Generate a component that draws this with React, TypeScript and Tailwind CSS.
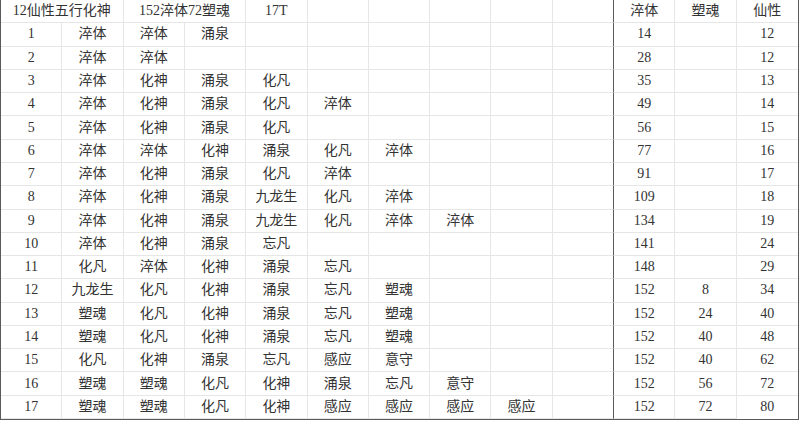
import React from "react";

const rows: string[][] = [
  ["淬体", "淬体", "涌泉"],
  ["淬体", "淬体"],
  ["淬体", "化神", "涌泉", "化凡"],
  ["淬体", "化神", "涌泉", "化凡", "淬体"],
  ["淬体", "化神", "涌泉", "化凡"],
  ["淬体", "淬体", "化神", "涌泉", "化凡", "淬体"],
  ["淬体", "化神", "涌泉", "化凡", "淬体"],
  ["淬体", "化神", "涌泉", "九龙生", "化凡", "淬体"],
  ["淬体", "化神", "涌泉", "九龙生", "化凡", "淬体", "淬体"],
  ["淬体", "化神", "涌泉", "忘凡"],
  ["化凡", "淬体", "化神", "涌泉", "忘凡"],
  ["九龙生", "化凡", "化神", "涌泉", "忘凡", "塑魂"],
  ["塑魂", "化凡", "化神", "涌泉", "忘凡", "塑魂"],
  ["塑魂", "化凡", "化神", "涌泉", "忘凡", "塑魂"],
  ["化凡", "化神", "涌泉", "忘凡", "感应", "意守"],
  ["塑魂", "塑魂", "化凡", "化神", "涌泉", "忘凡", "意守"],
  ["塑魂", "塑魂", "化凡", "化神", "感应", "感应", "感应", "感应"],
];

const stats: [string, string, string][] = [
  ["14", "", "12"],
  ["28", "", "12"],
  ["35", "", "13"],
  ["49", "", "14"],
  ["56", "", "15"],
  ["77", "", "16"],
  ["91", "", "17"],
  ["109", "", "18"],
  ["134", "", "19"],
  ["141", "", "24"],
  ["148", "", "29"],
  ["152", "8", "34"],
  ["152", "24", "40"],
  ["152", "40", "48"],
  ["152", "40", "62"],
  ["152", "56", "72"],
  ["152", "72", "80"],
];

function Cell({ children, span, sep }: { children?: React.ReactNode; span?: boolean; sep?: boolean }) {
  return (
    <div
      className={
        "flex items-center justify-center border-b border-[#e6e6e6] " +
        (sep ? "border-r border-r-[#5a5a5a] " : "border-r ") +
        (span ? "col-span-2" : "")
      }
    >
      {children}
    </div>
  );
}

export default function App() {
  return (
    <div className="w-[800px] h-[421px] bg-white overflow-hidden">
      <div
        className="w-[799px] h-[420px] border-l border-r border-b border-[#5a5a5a] grid grid-cols-[repeat(13,minmax(0,1fr))] grid-rows-[repeat(18,minmax(0,1fr))] text-[14px] leading-none text-[#333333]"
        style={{ fontFamily: '"Liberation Serif", "Noto Sans CJK SC", serif' }}
      >
        <Cell span>12仙性五行化神</Cell>
        <Cell span>152淬体72塑魂</Cell>
        <Cell>17T</Cell>
        <Cell />
        <Cell />
        <Cell />
        <Cell />
        <Cell sep />
        <Cell>淬体</Cell>
        <Cell>塑魂</Cell>
        <div className="flex items-center justify-center border-b border-[#e6e6e6]">仙性</div>
        {rows.map((r, i) => (
          <React.Fragment key={i}>
            <Cell>{i + 1}</Cell>
            {Array.from({ length: 9 }).map((_, j) => (
              <Cell key={j} sep={j === 8}>
                {r[j] ?? ""}
              </Cell>
            ))}
            <Cell>{stats[i][0]}</Cell>
            <Cell>{stats[i][1]}</Cell>
            <div
              className={
                "flex items-center justify-center " + (i < rows.length - 1 ? "border-b border-[#e6e6e6]" : "")
              }
            >
              {stats[i][2]}
            </div>
          </React.Fragment>
        ))}
      </div>
    </div>
  );
}
